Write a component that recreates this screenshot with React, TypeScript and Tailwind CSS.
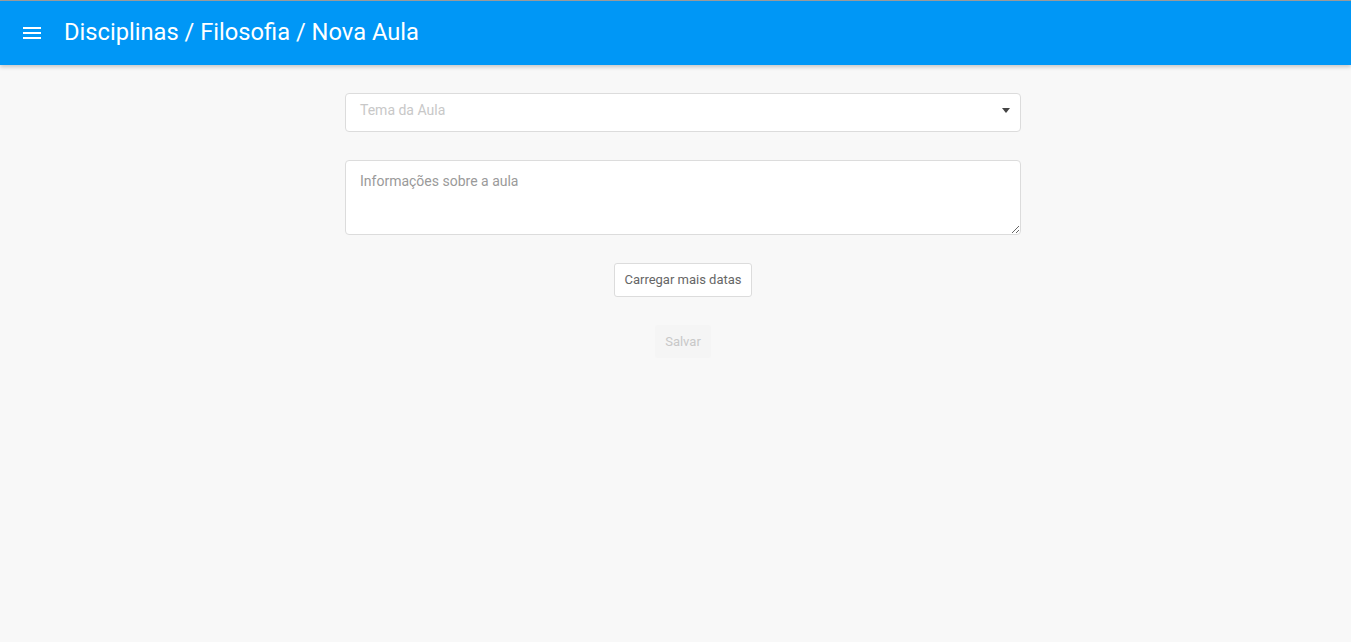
import React from 'react';

export default function App() {
  return (
    <div className="min-h-[642px] w-full bg-[#f8f8f8] font-['Roboto',sans-serif] border-t border-[#9e9e9e]">
      <header className="h-[64px] bg-[#0097f6] flex items-center shadow-[0_2px_4px_rgba(0,0,0,0.2)] relative">
        <button className="ml-[23px] mr-[23px] w-[18px] h-[20px] flex flex-col justify-center gap-[3px]">
          <span className="block h-[2px] w-[18px] bg-white" />
          <span className="block h-[2px] w-[18px] bg-white" />
          <span className="block h-[2px] w-[18px] bg-white" />
        </button>
        <h1 className="text-white text-[23.7px] leading-none">Disciplinas / Filosofia / Nova Aula</h1>
      </header>

      <main className="w-[676px] ml-[345px] pt-[28px] flex flex-col items-center">
        <div className="w-full h-[39px] bg-white border border-[#dcdcdc] rounded-[4px] flex items-center justify-between pl-[14px] pr-[10px] pb-[4px]">
          <span className="text-[14px] text-[#c8c8c8]">Tema da Aula</span>
          <svg width="8" height="5" viewBox="0 0 8 5"><path d="M0 0h8L4 5z" fill="#444" /></svg>
        </div>

        <textarea
          placeholder="Informações sobre a aula"
          className="mt-[28px] w-full h-[75px] bg-white border border-[#dcdcdc] rounded-[4px] px-[14px] py-[10px] text-[14px] placeholder:text-[#9a9a9a] outline-none"
        />

        <button className="mt-[28px] h-[34px] px-[9px] bg-white border border-[#dcdcdc] rounded-[3px] text-[13px] text-[#666]">
          Carregar mais datas
        </button>

        <button className="mt-[28px] h-[33px] px-[10px] bg-[#f5f5f5] rounded-[3px] text-[13px] text-[#c8c8c8]">
          Salvar
        </button>
      </main>
    </div>
  );
}
